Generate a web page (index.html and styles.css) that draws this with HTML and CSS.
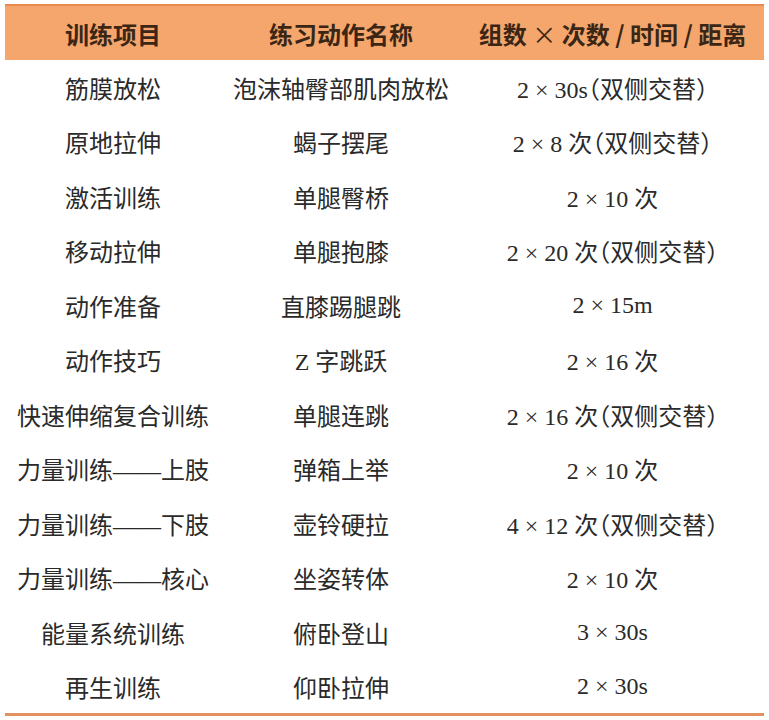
FILE: index.html
```html
<!DOCTYPE html>
<html lang="zh">
<head>
<meta charset="utf-8">
<link rel="stylesheet" href="styles.css">
</head>
<body>
<table class="plan">
  <colgroup>
    <col class="c1"><col class="c2"><col class="c3">
  </colgroup>
  <thead>
    <tr>
      <th>训练项目</th>
      <th>练习动作名称</th>
      <th>组数 <span class="times">×</span> 次数 / 时间 / 距离</th>
    </tr>
  </thead>
  <tbody>
    <tr><td>筋膜放松</td><td>泡沫轴臀部肌肉放松</td><td>2 × 30s<span class="cn">（双侧交替）</span></td></tr>
    <tr><td>原地拉伸</td><td>蝎子摆尾</td><td>2 × 8 <span class="cn">次（双侧交替）</span></td></tr>
    <tr><td>激活训练</td><td>单腿臀桥</td><td>2 × 10 <span class="cn">次</span></td></tr>
    <tr><td>移动拉伸</td><td>单腿抱膝</td><td>2 × 20 <span class="cn">次（双侧交替）</span></td></tr>
    <tr><td>动作准备</td><td>直膝踢腿跳</td><td>2 × 15m</td></tr>
    <tr><td>动作技巧</td><td>Z <span class="cn">字跳跃</span></td><td>2 × 16 <span class="cn">次</span></td></tr>
    <tr><td>快速伸缩复合训练</td><td>单腿连跳</td><td>2 × 16 <span class="cn">次（双侧交替）</span></td></tr>
    <tr><td>力量训练——上肢</td><td>弹箱上举</td><td>2 × 10 <span class="cn">次</span></td></tr>
    <tr><td>力量训练——下肢</td><td>壶铃硬拉</td><td>4 × 12 <span class="cn">次（双侧交替）</span></td></tr>
    <tr><td>力量训练——核心</td><td>坐姿转体</td><td>2 × 10 <span class="cn">次</span></td></tr>
    <tr><td>能量系统训练</td><td>俯卧登山</td><td>3 × 30s</td></tr>
    <tr><td>再生训练</td><td>仰卧拉伸</td><td>2 × 30s</td></tr>
  </tbody>
</table>
</body>
</html>
```

FILE: styles.css
```css
html, body {
  margin: 0;
  padding: 0;
  background: #ffffff;
}

body {
  padding: 4px 5px 0 5px;
}

.plan {
  width: 759px;
  border-collapse: collapse;
  table-layout: fixed;
  font-family: "Liberation Serif", "Noto Sans CJK SC", serif;
  color: #2a2a2a;
}

.c1 { width: 216px; }
.c2 { width: 240px; }
.c3 { width: 303px; }

.plan thead th {
  background: #f5a66c;
  border-top: 2px solid #ea8a4e;
  height: 54px;
  padding: 0;
  font-family: "Noto Sans CJK SC", sans-serif;
  font-weight: 700;
  font-size: 24px;
  color: #3b2616;
  text-align: center;
  vertical-align: middle;
  white-space: nowrap;
}

.times {
  font-weight: 400;
}

.plan tbody td {
  height: 54.5px;
  padding: 0;
  box-sizing: border-box;
  font-size: 24px;
  text-align: center;
  vertical-align: middle;
  white-space: nowrap;
}

.plan tbody tr:last-child td {
  border-bottom: 3px solid #e0915f;
}

.cn {
  font-family: "Noto Sans CJK SC", sans-serif;
  font-feature-settings: "halt" 1;
}
```
